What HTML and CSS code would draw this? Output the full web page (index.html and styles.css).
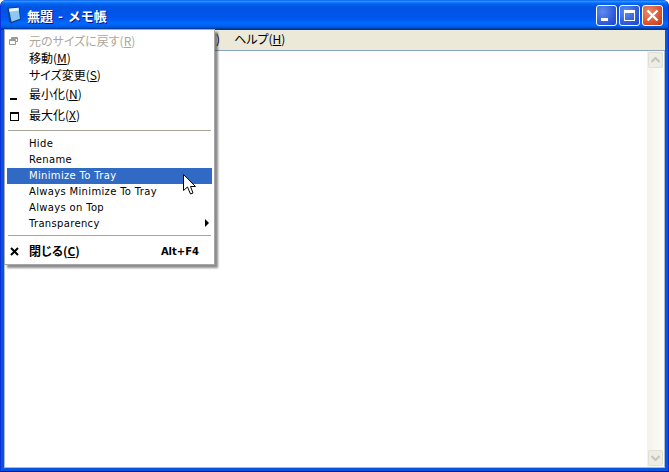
FILE: index.html
```html
<!DOCTYPE html>
<html>
<head>
    <link rel="stylesheet" href="styles.css">
</head>
<body>
    <div class="window">
        <div class="titlebar">
            <svg class="app-icon" width="16" height="18" viewBox="0 0 16 18">
                <path d="M1.500 2 L13 0.500 L15 13.500 L5 17.500 L3 16 Z" fill="#0c3f96"/>
                <path d="M3 2.800 L12.500 1.800 L14 12.800 L5.500 15.800 Z" fill="#8fc8ee"/>
                <path d="M3 2.800 L12.500 1.800 L12.900 4.500 L3.400 5.700 Z" fill="#e8f6fd"/>
            </svg>
            <span class="title-text">無題 - メモ帳</span>
            <div class="title-buttons">
                <div class="tb-btn">
                    <svg width="19" height="19" viewBox="0 0 19 19"><rect x="4" y="12" width="7" height="3" fill="#fff"/></svg>
                </div>
                <div class="tb-btn">
                    <svg width="19" height="19" viewBox="0 0 19 19"><path d="M4 5.500h11M4 6.500h11" stroke="#fff" fill="none"/><rect x="4.500" y="4.500" width="10" height="10" fill="none" stroke="#fff"/></svg>
                </div>
                <div class="tb-btn tb-close">
                    <svg width="19" height="19" viewBox="0 0 19 19"><path d="M4.500 4.500 L14.500 14.500 M14.500 4.500 L4.500 14.500" stroke="#fff" stroke-width="2.400"/></svg>
                </div>
            </div>
        </div>
        <div class="menubar">
            <span class="menubar-item">)</span>
            <span class="menubar-item">ヘルプ(<u>H</u>)</span>
        </div>
        <div class="client">
            <div class="editor"></div>
            <div class="scrollbar">
                <div class="sb-btn">
                    <svg width="9" height="6" viewBox="0 0 9 6"><path d="M0.500 5 L4.500 1 L8.500 5" stroke="#c4c4bc" stroke-width="2" fill="none"/></svg>
                </div>
                <div class="sb-track"></div>
                <div class="sb-btn">
                    <svg width="9" height="6" viewBox="0 0 9 6"><path d="M0.500 1 L4.500 5 L8.500 1" stroke="#c4c4bc" stroke-width="2" fill="none"/></svg>
                </div>
            </div>
        </div>

        <div class="sysmenu">
            <div class="item disabled tall">
                <span class="glyph glyph-restore">
                    <svg width="9" height="8" viewBox="0 0 9 8"><path d="M2.500 2V0.500H8.500V4.500H7 M0.500 2.500H6.500V7.500H0.500Z M0.500 3.500H6.500 M2.500 1.500H8.500" stroke="#9a9a92" fill="none"/></svg>
                </span>
                <span class="jp">元のサイズに戻す(<u>R</u>)</span>
            </div>
            <div class="item"><span class="glyph"></span><span class="jp">移動(<u>M</u>)</span></div>
            <div class="item"><span class="glyph"></span><span class="jp">サイズ変更(<u>S</u>)</span></div>
            <div class="item tall2">
                <span class="glyph"><svg width="8" height="13" viewBox="0 0 8 13"><rect x="0" y="10" width="7" height="2" fill="#000"/></svg></span>
                <span class="jp">最小化(<u>N</u>)</span>
            </div>
            <div class="item tall2">
                <span class="glyph"><svg class="max-icon" width="9" height="9" viewBox="0 0 9 9"><rect x="0.500" y="0.500" width="8" height="8" fill="none" stroke="#000"/><path d="M0 1.500H9" stroke="#000"/></svg></span>
                <span class="jp">最大化(<u>X</u>)</span>
            </div>
            <div class="sep"></div>
            <div class="item small"><span class="glyph"></span>Hide</div>
            <div class="item small"><span class="glyph"></span>Rename</div>
            <div class="item small active"><span class="glyph"></span>Minimize To Tray</div>
            <div class="item small"><span class="glyph"></span>Always Minimize To Tray</div>
            <div class="item small"><span class="glyph"></span>Always on Top</div>
            <div class="item small">
                <span class="glyph"></span>Transparency
                <span class="arrow"></span>
            </div>
            <div class="sep sep-low"></div>
            <div class="item close-row">
                <span class="glyph">
                    <svg width="9" height="9" viewBox="0 0 9 9"><path d="M1 1 L8 8 M8 1 L1 8" stroke="#000" stroke-width="2"/></svg>
                </span>
                <span class="jp">閉じる(<u>C</u>)</span>
                <span class="shortcut">Alt+F4</span>
            </div>
        </div>

        <svg class="cursor" width="13" height="21" viewBox="0 0 13 21">
            <path d="M0.500 0.500 V16.500 L4.500 13 L7.500 20 L10 19 L7.500 12.500 L12.500 12.500 Z" fill="#fff" stroke="#000"/>
        </svg>
    </div>
</body>
</html>
```
FILE: styles.css
```css
html, body {
    margin: 0;
    padding: 0;
}

body {
    width: 669px;
    height: 472px;
    overflow: hidden;
    background: #fff;
}

.window {
    position: relative;
    width: 669px;
    height: 472px;
    box-sizing: border-box;
    display: flex;
    flex-direction: column;
    background: #0855dd;
    padding: 0 3px 3px 3px;
    border-left: 1px solid #0831d9;
    border-right: 1px solid #0831d9;
    border-bottom: 1px solid #00138c;
    border-radius: 6px 6px 0 0;
    overflow: hidden;
    font-family: "Liberation Sans", "Noto Sans CJK JP", sans-serif;
}

.titlebar {
    height: 30px;
    flex: none;
    margin: 0 -3px;
    padding: 0 5px 0 5px;
    display: flex;
    align-items: center;
    box-sizing: border-box;
    background: linear-gradient(to bottom, #0058ee 0, #3593ff 4%, #288eff 6%, #127dff 8%, #036ffc 10%, #0262ee 14%, #0057e5 20%, #0054e3 24%, #0055eb 56%, #005bf5 66%, #026afe 76%, #0062ef 86%, #0052d6 92%, #0040ab 94%, #003092 100%);
}

.app-icon {
    flex: none;
    margin-right: 5px;
}

.title-text {
    color: #fff;
    font-family: "Noto Sans CJK JP", sans-serif;
    font-size: 13px;
    font-weight: 700;
    word-spacing: 2px;
    text-shadow: 1px 1px 0 #0f1089;
}

.title-buttons {
    margin-left: auto;
    display: flex;
    gap: 2px;
}

.tb-btn {
    width: 21px;
    height: 21px;
    box-sizing: border-box;
    border: 1px solid #fff;
    border-radius: 3px;
    background: radial-gradient(circle at 30% 30%, #5f8bf0, #2a55d8 70%, #2347c8);
    display: flex;
    align-items: center;
    justify-content: center;
}

.tb-close {
    background: radial-gradient(circle at 30% 30%, #e88a6a, #d9512b 65%, #c23a14);
}

.menubar {
    height: 21px;
    flex: none;
    box-sizing: border-box;
    padding: 0 0 3px 212px;
    background: #ece9d8;
    border-bottom: 1px solid #8aa5c0;
    display: flex;
    align-items: center;
    gap: 14px;
}

.menubar-item {
    font-family: "Noto Sans CJK JP", sans-serif;
    font-size: 12px;
    font-feature-settings: "palt";
    color: #000;
}

.client {
    flex: 1;
    display: flex;
    background: #fff;
    min-height: 0;
    border: solid #a8bcd0;
    border-width: 0 1px 1px 1px;
}

.editor {
    flex: 1;
}

.scrollbar {
    width: 17px;
    box-sizing: border-box;
    padding: 1px;
    display: flex;
    flex-direction: column;
    background: linear-gradient(to right, #f3f2ea, #fdfdfa);
}

.sb-track {
    flex: 1;
}

.sb-btn {
    height: 16px;
    box-sizing: border-box;
    border: 1px solid #e2e0d2;
    border-radius: 2px;
    background: #eeede5;
    display: flex;
    align-items: center;
    justify-content: center;
}

.sysmenu {
    position: absolute;
    left: 3px;
    top: 29px;
    width: 211px;
    height: 236px;
    box-sizing: border-box;
    background: #fff;
    border: 1px solid #a7a6aa;
    padding: 2px 2px;
    box-shadow: 3px 3px 2px rgba(0, 0, 0, 0.45);
    font-size: 11px;
    color: #000;
}

.item {
    height: 17px;
    display: flex;
    align-items: center;
    white-space: nowrap;
}

.item.tall {
    height: 18px;
}

.item.tall2 {
    height: 21px;
}

.glyph {
    width: 19px;
    padding-left: 3px;
    flex: none;
    display: flex;
    align-items: center;
}

.glyph-restore {
    width: 20px;
    padding-left: 2px;
}

.max-icon {
    margin-top: 2px;
}

.jp {
    font-family: "Noto Sans CJK JP", sans-serif;
    font-size: 12px;
    font-feature-settings: "palt";
    margin-bottom: 2px;
}

.small {
    height: 16px;
    box-sizing: border-box;
    padding-bottom: 2px;
    font-family: "DejaVu Sans", sans-serif;
    font-size: 10px;
    letter-spacing: 0.33px;
}

.disabled {
    color: #aca899;
}

.active {
    background: #316ac5;
    color: #fff;
}

.arrow {
    margin-left: auto;
    margin-right: 3px;
    border-left: 4px solid #000;
    border-top: 4px solid transparent;
    border-bottom: 4px solid transparent;
}

.sep {
    height: 1px;
    margin: 4px 1px 5px 1px;
    background: #aca899;
}

.sep-low {
    margin: 3px 1px 6px 1px;
}

.close-row {
    font-weight: 700;
    height: 18px;
}

.shortcut {
    margin-left: auto;
    margin-right: 13px;
    font-family: "DejaVu Sans", sans-serif;
    font-size: 10px;
}

.cursor {
    position: absolute;
    left: 182px;
    top: 174px;
}
```
